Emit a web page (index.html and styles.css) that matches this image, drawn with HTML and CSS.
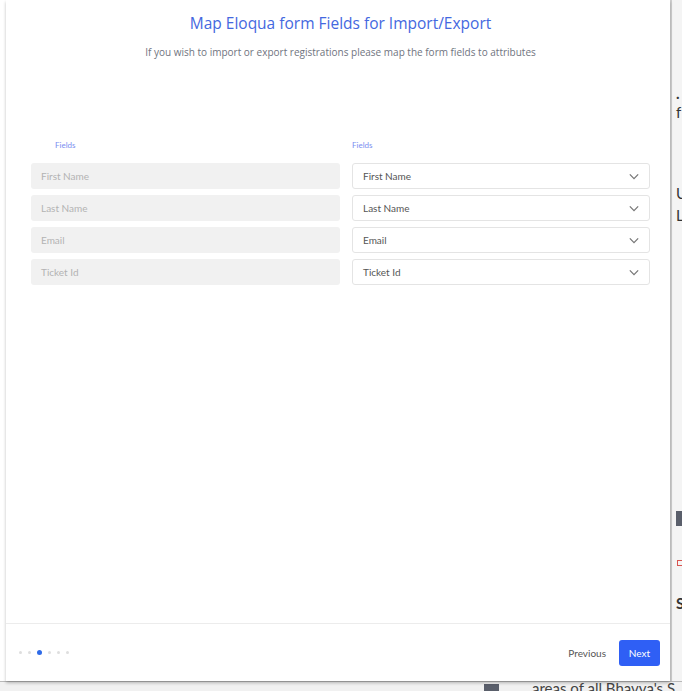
FILE: index.html
```html
<!DOCTYPE html>
<html lang="en">
<head>
    <meta charset="UTF-8">
    <meta name="viewport" content="width=device-width, initial-scale=1.0">
    <title>Map Eloqua form Fields</title>
    <link rel="stylesheet" href="styles.css">
</head>
<body>
    <!-- page behind the modal -->
    <div class="backdrop">
        <div class="bg-col"></div>
        <span class="bg-frag f1">.</span>
        <span class="bg-frag f2">f</span>
        <span class="bg-frag f3">U</span>
        <span class="bg-frag f4">L</span>
        <div class="bg-block side"></div>
        <div class="bg-red"></div>
        <span class="bg-frag f5">S</span>
        <div class="bg-line"></div>
        <div class="bg-block bottom"></div>
        <span class="bg-text">areas of all Bhavya's S</span>
    </div>

    <div class="modal">
        <div class="modal-body">
            <h2 class="modal-title">Map Eloqua form Fields for Import/Export</h2>
            <p class="modal-sub">If you wish to import or export registrations please map the form fields to attributes</p>

            <div class="mapping">
                <div class="col-label left">Fields</div>
                <div class="col-label">Fields</div>

                <div class="field">First Name</div>
                <div class="select">First Name <svg class="chev" viewBox="0 0 12 8"><path d="M1 1.5l5 5 5-5"/></svg></div>

                <div class="field">Last Name</div>
                <div class="select">Last Name <svg class="chev" viewBox="0 0 12 8"><path d="M1 1.5l5 5 5-5"/></svg></div>

                <div class="field">Email</div>
                <div class="select">Email <svg class="chev" viewBox="0 0 12 8"><path d="M1 1.5l5 5 5-5"/></svg></div>

                <div class="field">Ticket Id</div>
                <div class="select">Ticket Id <svg class="chev" viewBox="0 0 12 8"><path d="M1 1.5l5 5 5-5"/></svg></div>
            </div>
        </div>

        <div class="modal-footer">
            <div class="steps">
                <span class="dot"></span>
                <span class="dot"></span>
                <span class="dot active"></span>
                <span class="dot"></span>
                <span class="dot"></span>
                <span class="dot"></span>
            </div>
            <div class="actions">
                <button class="btn-link">Previous</button>
                <button class="btn-primary">Next</button>
            </div>
        </div>
    </div>
</body>
</html>
```

FILE: styles.css
```css
* {
    box-sizing: border-box;
}
body {
    margin: 0;
    width: 682px;
    height: 691px;
    overflow: hidden;
    position: relative;
    background: #fff;
    font-family: Lato, "Open Sans", sans-serif;
}

/* background page */
.backdrop {
    position: absolute;
    inset: 0;
}
.bg-col {
    position: absolute;
    left: 670px;
    top: 0;
    width: 12px;
    height: 691px;
    background: #f4f4f4;
    border-left: 2px solid #cfcfcf;
}
.bg-frag {
    position: absolute;
    font-size: 15px;
    color: #333;
    left: 676px;
}
.f1 { top: 84px; font-weight: bold; }
.f2 { top: 103px; }
.f3 { top: 184px; }
.f4 { top: 206px; }
.f5 { top: 594px; font-weight: bold; }
.bg-block {
    position: absolute;
    background: #5a5f6b;
}
.bg-block.side {
    left: 676px;
    top: 511px;
    width: 6px;
    height: 15px;
}
.bg-red {
    position: absolute;
    left: 677px;
    top: 560px;
    width: 5px;
    height: 6px;
    border: 1px solid #d9534f;
    border-right: none;
}
.bg-line {
    position: absolute;
    left: 0;
    top: 681px;
    width: 682px;
    height: 10px;
    background: #f1f1f1;
    border-top: 1px solid #b9b9b9;
}
.bg-block.bottom {
    left: 484px;
    top: 684px;
    width: 15px;
    height: 7px;
}
.bg-text {
    position: absolute;
    left: 532px;
    top: 679px;
    font-size: 15px;
    color: #444;
}

/* modal */
.modal {
    position: absolute;
    left: 6px;
    top: 0;
    width: 664px;
    height: 681px;
    background: #fff;
    box-shadow: 0 2px 3px rgba(0, 0, 0, 0.25);
    display: flex;
    flex-direction: column;
}
.modal-body {
    flex: 1;
    padding: 13px 20px 0 25px;
}
.modal-title {
    margin: 0;
    text-align: center;
    font-family: "Open Sans", sans-serif;
    font-weight: 400;
    font-size: 15.5px;
    line-height: 20px;
    color: #4468e0;
}
.modal-sub {
    margin: 12px 0 0;
    text-align: center;
    font-family: "Open Sans", sans-serif;
    font-size: 10px;
    line-height: 14px;
    color: #6f7480;
}
.mapping {
    margin-top: 80px;
    display: grid;
    grid-template-columns: 309px 298px;
    column-gap: 12px;
    row-gap: 6px;
}
.col-label {
    font-size: 8px;
    line-height: 12px;
    color: #7a8ef0;
    margin-bottom: 6px;
}
.col-label.left {
    padding-left: 24px;
}
.field {
    height: 26px;
    line-height: 26px;
    padding-left: 10px;
    background: #f1f1f1;
    border-radius: 3px;
    font-size: 10px;
    color: #b3b3b3;
}
.select {
    height: 26px;
    line-height: 24px;
    padding: 0 10px;
    border: 1px solid #e4e4e4;
    border-radius: 3px;
    font-size: 10px;
    color: #555;
    display: flex;
    justify-content: space-between;
    align-items: center;
}
.chev {
    width: 10px;
    height: 7px;
    fill: none;
    stroke: #777;
    stroke-width: 1.5;
}

/* footer */
.modal-footer {
    height: 58px;
    border-top: 1px solid #ececec;
    display: flex;
    align-items: center;
    justify-content: space-between;
    padding: 0 10px 0 13px;
}
.steps {
    display: flex;
    align-items: center;
    gap: 6px;
}
.dot {
    width: 3px;
    height: 3px;
    border-radius: 50%;
    background: #dedede;
}
.dot.active {
    width: 5px;
    height: 5px;
    background: #2f6be8;
}
.actions {
    display: flex;
    align-items: center;
    gap: 13px;
}
.btn-link {
    border: none;
    background: none;
    padding: 0;
    font-family: Lato, sans-serif;
    font-size: 10px;
    color: #555;
}
.btn-primary {
    border: none;
    background: #2f5ff5;
    color: #fff;
    font-family: Lato, sans-serif;
    font-size: 10px;
    width: 41px;
    height: 26px;
    border-radius: 3px;
}
```
